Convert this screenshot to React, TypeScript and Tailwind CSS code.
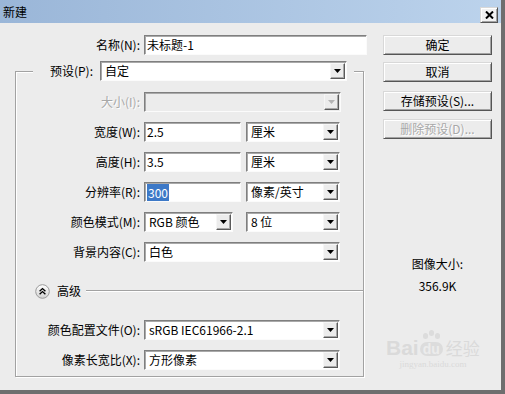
import React from 'react';

const sunken =
  'border border-t-[#7f7f7f] border-l-[#7f7f7f] border-r-[#fbfbfb] border-b-[#fbfbfb] shadow-[inset_1px_1px_0_#a9a9a9]';

const raised =
  'border border-t-[#d8d8d8] border-l-[#d8d8d8] border-r-[#555555] border-b-[#555555] shadow-[inset_1px_1px_0_#ffffff,inset_-1px_-1px_0_#a3a3a3]';

const DropBtn = ({ disabled = false }: { disabled?: boolean }) => (
  <div className="w-[15px] h-[16px] mr-[1px] shrink-0 flex items-center justify-center bg-[#ececec] border border-t-[#f6f6f6] border-l-[#f6f6f6] border-r-[#5a5a5a] border-b-[#5a5a5a] shadow-[inset_-1px_-1px_0_#a8a8a8]">
    <svg width="7" height="4" viewBox="0 0 7 4">
      <path d="M0 0h7L3.5 4z" fill={disabled ? '#b4b4b4' : '#000'} />
    </svg>
  </div>
);

const Input = ({ w, value, selected = false }: { w: string; value: string; selected?: boolean }) => (
  <div className={`${w} h-[20px] ${sunken} bg-white flex items-center pl-[2px]`}>
    {selected ? <span className="bg-[#3d79c7] text-white leading-[17px] px-[1px]">{value}</span> : value}
  </div>
);

const Select = ({ w, value, disabled = false }: { w: string; value: string; disabled?: boolean }) => (
  <div className={`${w} h-[20px] ${sunken} ${disabled ? 'bg-[#ececec]' : 'bg-white'} flex items-center pl-[4px]`}>
    <span className="flex-1 truncate">{value}</span>
    <DropBtn disabled={disabled} />
  </div>
);

const Row = ({
  label,
  disabled = false,
  className = '',
  children,
}: {
  label: string;
  disabled?: boolean;
  className?: string;
  children: React.ReactNode;
}) => (
  <div className={`flex items-center h-[20px] ${className}`}>
    <div className={`w-[124px] text-right ${disabled ? 'text-[#a8a8a8] [text-shadow:1px_1px_0_#fff]' : ''}`}>{label}</div>
    <div className="ml-[4px] flex items-center">{children}</div>
  </div>
);

const Button = ({ label, disabled = false, className = '' }: { label: string; disabled?: boolean; className?: string }) => (
  <div
    className={`w-[109px] h-[20px] ${raised} bg-[#ececec] flex items-center justify-center ${
      disabled ? 'text-[#a8a8a8] [text-shadow:1px_1px_0_#fff]' : ''
    } ${className}`}
  >
    {label}
  </div>
);

export default function App() {
  return (
    <div className="w-[505px] h-[394px] bg-[#ececec] border-r-[4px] border-b-[4px] border-[#6e6e6e] flex flex-col text-[12px] leading-[16px] text-black font-['Noto_Sans_CJK_SC','Noto_Sans',sans-serif] overflow-hidden relative">
      {/* title bar */}
      <div className="h-[23px] shrink-0 flex items-center justify-between pl-[3px] pr-[3px] bg-gradient-to-r from-[#9ab6d8] to-[#bcd3ec]">
        <span>新建</span>
        <div className={`w-[18px] h-[16px] mt-[6px] bg-[#f2f2f2] ${raised} flex items-center justify-center`}>
          <svg width="9" height="8" viewBox="0 0 9 8">
            <path d="M1 0.5L8 7.5M8 0.5L1 7.5" stroke="#000" strokeWidth="2" />
          </svg>
        </div>
      </div>

      <div className="flex">
        {/* left side */}
        <div className="w-[383px] shrink-0">
          <div className="flex items-center h-[20px] mt-[12px]">
            <div className="w-[140px] text-right">名称(N):</div>
            <div className="ml-[4px]">
              <Input w="w-[223px]" value="未标题-1" />
            </div>
          </div>

          <fieldset className="ml-[15px] mt-[6px] w-[349px] border border-[#a2a2a2] shadow-[inset_1px_1px_0_#ffffff,1px_1px_0_#ffffff] pb-[6px]">
            <legend className="ml-[17px] pl-[2px] pr-[7px] bg-[#ececec] flex items-center h-[20px]">
              <div className="w-[58px] text-right">预设(P):</div>
              <div className="ml-[7px]">
                <Select w="w-[247px]" value="自定" />
              </div>
            </legend>

            <Row label="大小(I):" disabled className="mt-[11px]">
              <Select w="w-[197px]" value="" disabled />
            </Row>
            <Row label="宽度(W):" className="mt-[10px]">
              <Input w="w-[97px]" value="2.5" />
              <div className="ml-[5px]">
                <Select w="w-[94px]" value="厘米" />
              </div>
            </Row>
            <Row label="高度(H):" className="mt-[10px]">
              <Input w="w-[97px]" value="3.5" />
              <div className="ml-[5px]">
                <Select w="w-[94px]" value="厘米" />
              </div>
            </Row>
            <Row label="分辨率(R):" className="mt-[10px]">
              <Input w="w-[97px]" value="300" selected />
              <div className="ml-[5px]">
                <Select w="w-[94px]" value="像素/英寸" />
              </div>
            </Row>
            <Row label="颜色模式(M):" className="mt-[10px]">
              <Select w="w-[89px]" value="RGB 颜色" />
              <div className="ml-[13px]">
                <Select w="w-[94px]" value="8 位" />
              </div>
            </Row>
            <Row label="背景内容(C):" className="mt-[10px]">
              <Select w="w-[196px]" value="白色" />
            </Row>

            {/* advanced */}
            <div className="flex items-center h-[16px] mt-[21px] pl-[19px]">
              <svg width="15" height="15" viewBox="0 0 15 15" className="shrink-0">
                <defs>
                  <linearGradient id="adv" x1="0" y1="0" x2="0" y2="1">
                    <stop offset="0" stopColor="#ffffff" />
                    <stop offset="1" stopColor="#d2d2d2" />
                  </linearGradient>
                </defs>
                <circle cx="7.5" cy="7.5" r="6.8" fill="url(#adv)" stroke="#9a9a9a" strokeWidth="1" />
                <path d="M4.6 7.2L7.5 4.6L10.4 7.2M4.6 10.2L7.5 7.6L10.4 10.2" fill="none" stroke="#000" strokeWidth="1.4" />
              </svg>
              <span className="ml-[7px]">高级</span>
              <div className="flex-1 ml-[5px] border-t border-t-[#a2a2a2] border-b border-b-white" />
            </div>

            <Row label="颜色配置文件(O):" className="mt-[21px]">
              <Select w="w-[196px]" value="sRGB IEC61966-2.1" />
            </Row>
            <Row label="像素长宽比(X):" className="mt-[10px]">
              <Select w="w-[196px]" value="方形像素" />
            </Row>
          </fieldset>
        </div>

        {/* right side */}
        <div className="w-[109px] shrink-0 flex flex-col items-center">
          <Button label="确定" className="mt-[12px]" />
          <Button label="取消" className="mt-[7px]" />
          <Button label="存储预设(S)..." className="mt-[9px]" />
          <Button label="删除预设(D)..." disabled className="mt-[8px]" />
          <div className="mt-[117px]">图像大小:</div>
          <div className="mt-[6px]">356.9K</div>
        </div>
      </div>

      {/* watermark */}
      <div className="absolute left-[386px] top-[338px] flex flex-col items-center text-[#dadada] pointer-events-none">
        <div className="flex items-end leading-[20px]">
          <span className="text-[21px] font-bold font-['Liberation_Sans',sans-serif]">Bai</span>
          <span className="relative text-[14px] font-bold font-['Liberation_Sans',sans-serif] bg-[#dcdcdc] text-[#ececec] rounded-full px-[3px] leading-[14px] mb-[2px] mx-[1px]">
            du
            <span className="absolute -top-[9px] left-[3px] w-[5px] h-[6px] rounded-full bg-[#dcdcdc]" />
            <span className="absolute -top-[12px] left-[9px] w-[5px] h-[6px] rounded-full bg-[#dcdcdc]" />
            <span className="absolute -top-[9px] left-[15px] w-[5px] h-[6px] rounded-full bg-[#dcdcdc]" />
          </span>
          <span className="text-[17px] ml-[2px]">经验</span>
        </div>
        <span className="text-[9px] leading-[12px] font-['Liberation_Serif',serif]">jingyan.baidu.com</span>
      </div>
    </div>
  );
}
